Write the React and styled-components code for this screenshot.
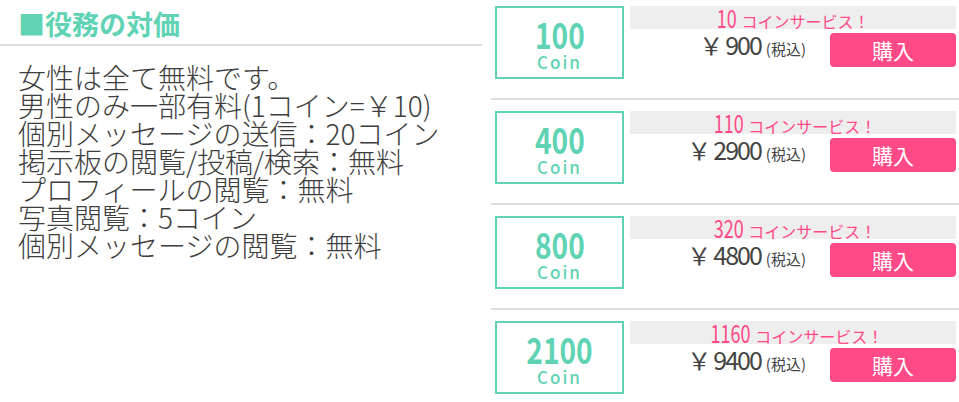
import React from "react";
import styled, { createGlobalStyle } from "styled-components";

const GlobalStyle = createGlobalStyle`
  html, body {
    margin: 0;
    padding: 0;
    background: #fff;
  }
  body {
    font-family: "Noto Sans CJK JP", "Noto Sans", sans-serif;
  }
`;

const teal = "#5fd3b4";
const pink = "#ff4a88";

const plans = [
  { coin: "100", bonus: "10", price: "900" },
  { coin: "400", bonus: "110", price: "2900" },
  { coin: "800", bonus: "320", price: "4800" },
  { coin: "2100", bonus: "1160", price: "9400" },
];

const rules = [
  "女性は全て無料です。",
  "男性のみ一部有料(1コイン=￥10)",
  "個別メッセージの送信：20コイン",
  "掲示板の閲覧/投稿/検索：無料",
  "プロフィールの閲覧：無料",
  "写真閲覧：5コイン",
  "個別メッセージの閲覧：無料",
];

function App() {
  return (
    <>
      <GlobalStyle />
      <Page>
        <LeftColumn>
          <Title>■役務の対価</Title>
          <RuleList>
            {rules.map((r) => (
              <Rule key={r}>{r}</Rule>
            ))}
          </RuleList>
        </LeftColumn>
        <RightColumn>
          {plans.map((p) => (
            <PlanRow key={p.coin}>
              <CoinBox>
                <CoinAmount>{p.coin}</CoinAmount>
                <CoinLabel>Coin</CoinLabel>
              </CoinBox>
              <Info>
                <Bonus>
                  <BonusNum>{p.bonus}</BonusNum>
                  <BonusText>コインサービス！</BonusText>
                </Bonus>
                <PriceLine>
                  <Price>
                    ￥<PriceNum>{p.price}</PriceNum>
                    <Tax>(税込)</Tax>
                  </Price>
                  <BuyButton type="button">購入</BuyButton>
                </PriceLine>
              </Info>
            </PlanRow>
          ))}
        </RightColumn>
      </Page>
    </>
  );
}

export default App;

const Page = styled.div`
  display: flex;
  width: 959px;
  height: 402px;
  overflow: hidden;
`;

const LeftColumn = styled.div`
  width: 482px;
  flex: none;
`;

const Title = styled.h2`
  margin: 0;
  height: 46px;
  box-sizing: border-box;
  padding: 5px 0 0 18px;
  font-size: 27px;
  line-height: 38px;
  font-weight: 700;
  color: ${teal};
  border-bottom: 2px solid #dddddd;
`;

const RuleList = styled.ul`
  list-style: none;
  margin: 0;
  padding: 17px 0 0 18px;
`;

const Rule = styled.li`
  font-size: 28px;
  line-height: 28px;
  font-weight: 300;
  color: #3e3e3e;
  white-space: nowrap;
`;

const RightColumn = styled.div`
  flex: 1;
  margin-left: 9px;
`;

const PlanRow = styled.div`
  display: flex;
  gap: 6px;
  padding: 11px 3px 19px 4px;
  border-bottom: 2px solid #dddddd;

  &:first-child {
    padding-top: 6px;
  }
`;

const CoinBox = styled.div`
  width: 129px;
  height: 73px;
  box-sizing: border-box;
  border: 2px solid ${teal};
  display: flex;
  flex-direction: column;
  align-items: center;
  padding-top: 8px;
  color: ${teal};
`;

const CoinAmount = styled.span`
  display: inline-block;
  font-size: 36px;
  line-height: 34px;
  font-weight: 700;
  transform: scaleX(0.78);
`;

const CoinLabel = styled.span`
  font-size: 17px;
  line-height: 20px;
  letter-spacing: 2px;
  font-weight: 500;
  margin-top: 2px;
`;

const Info = styled.div`
  flex: 1;
  display: flex;
  flex-direction: column;
`;

const Bonus = styled.div`
  height: 23px;
  background: #eeeeee;
  display: flex;
  justify-content: center;
  align-items: baseline;
  color: ${pink};
  line-height: 22px;
  padding-right: 8px;
`;

const BonusNum = styled.span`
  font-size: 25px;
  display: inline-block;
  transform: scaleX(0.72);
  transform-origin: right center;
  margin-right: 5px;
`;

const BonusText = styled.span`
  font-size: 16px;
`;

const PriceLine = styled.div`
  display: flex;
  justify-content: flex-end;
  align-items: flex-start;
  margin-top: 4px;
`;

const Price = styled.span`
  margin-right: 24px;
  margin-top: -4px;
  font-size: 24px;
  line-height: 30px;
  color: #444444;
  display: flex;
  align-items: baseline;
`;

const PriceNum = styled.span`
  display: inline-block;
  font-size: 25px;
  margin-left: 2px;
  letter-spacing: -2px;
`;

const Tax = styled.span`
  font-size: 15px;
  margin-left: 5px;
`;

const BuyButton = styled.button`
  width: 126px;
  height: 34px;
  border: none;
  border-radius: 4px;
  background: ${pink};
  color: #ffffff;
  font-family: inherit;
  font-size: 21px;
  line-height: 34px;
  padding: 0;
  cursor: pointer;
`;
